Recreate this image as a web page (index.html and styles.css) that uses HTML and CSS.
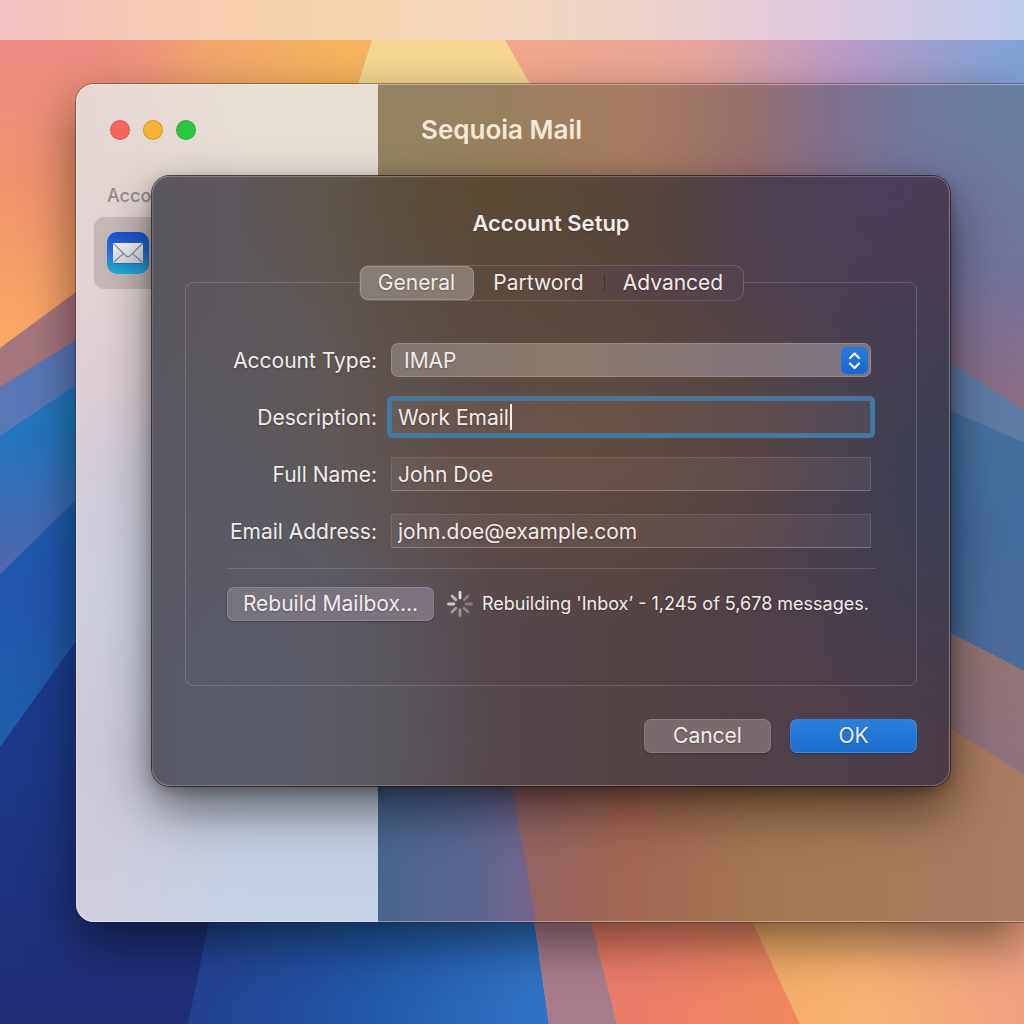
FILE: index.html
```html
<!DOCTYPE html>
<html lang="en">
<head>
<meta charset="utf-8">
<meta name="viewport" content="width=device-width, initial-scale=1">
<title>Sequoia Mail</title>
<link rel="stylesheet" href="styles.css">
</head>
<body>
<div class="desktop">
  <svg class="wallpaper" viewBox="0 0 1024 1024" preserveAspectRatio="none" aria-hidden="true">
    <defs>
      <linearGradient id="sky" x1="0" x2="1" y1="0" y2="0">
        <stop offset="0" stop-color="#ea8a90"/><stop offset=".16" stop-color="#f2a070"/>
        <stop offset=".34" stop-color="#f5b45c"/><stop offset=".5" stop-color="#f3a888"/>
        <stop offset=".68" stop-color="#e8a49c"/><stop offset=".83" stop-color="#b99cc8"/>
        <stop offset="1" stop-color="#7ea3d8"/>
      </linearGradient>
      <linearGradient id="dawn" x1="0" x2="0" y1="0" y2="1">
        <stop offset="0" stop-color="#ec8a8c"/><stop offset=".45" stop-color="#f0936c"/>
        <stop offset="1" stop-color="#fdb062"/>
      </linearGradient>
      <linearGradient id="dawnFade" x1="0" x2="1" y1="0" y2="0">
        <stop offset="0" stop-color="#fff"/><stop offset=".4" stop-color="#fff"/><stop offset="1" stop-color="#000"/>
      </linearGradient>
      <mask id="dawnMask"><rect width="200" height="400" fill="url(#dawnFade)"/></mask>
      <linearGradient id="ridge3" x1="0" x2="0" y1="0" y2="1">
        <stop offset="0" stop-color="#2680b8"/><stop offset=".45" stop-color="#2374bd"/>
        <stop offset="1" stop-color="#5a64aa"/>
      </linearGradient>
      <linearGradient id="ridge4" x1="0" x2="0" y1="0" y2="1">
        <stop offset="0" stop-color="#1a63ad"/><stop offset=".5" stop-color="#2157ae"/>
        <stop offset="1" stop-color="#1d62a8"/>
      </linearGradient>
      <linearGradient id="deep" x1="0" x2="0" y1="0" y2="1">
        <stop offset="0" stop-color="#1a4899"/><stop offset=".4" stop-color="#1c3a8c"/>
        <stop offset="1" stop-color="#212c76"/>
      </linearGradient>
      <linearGradient id="sea" x1="0" x2="1" y1="0" y2="0">
        <stop offset="0" stop-color="#23408f"/><stop offset=".5" stop-color="#2159a9"/>
        <stop offset="1" stop-color="#3074c4"/>
      </linearGradient>
      <linearGradient id="coral" x1="0" x2="1" y1="0" y2="0">
        <stop offset="0" stop-color="#e8786c"/><stop offset="1" stop-color="#f08a5e"/>
      </linearGradient>
      <linearGradient id="sand" x1="0" x2="1" y1="0" y2="0">
        <stop offset="0" stop-color="#f2a95c"/><stop offset=".5" stop-color="#f8b172"/>
        <stop offset="1" stop-color="#f0a080"/>
      </linearGradient>
    </defs>
    <rect width="1024" height="1024" fill="url(#sky)"/>
    <rect width="200" height="400" fill="url(#dawn)" mask="url(#dawnMask)"/>
    <path d="M384 0H494L505 40L530 84L560 140H340L358 84L372 40Z" fill="#f7d893"/>
    <path d="M0 348L76 292L200 210V1024H0Z" fill="#a5767e"/>
    <path d="M0 387L76 340L200 270V1024H0Z" fill="#5878b8"/>
    <path d="M0 436L76 385L200 300V600H0Z" fill="url(#ridge3)"/>
    <path d="M0 574L76 500L200 390V800H0Z" fill="url(#ridge4)"/>
    <path d="M0 747L76 641L200 480H300V1024H0Z" fill="url(#deep)"/>
    <path d="M209 921L230 820H520L549 1024H188Z" fill="url(#sea)"/>
    <path d="M520 820L549 1024H617L570 820Z" fill="#a97c8c"/>
    <path d="M565 820L617 1024H800L705 820Z" fill="url(#coral)"/>
    <path d="M705 820L800 1024H1024V820Z" fill="url(#sand)"/>
  </svg>

  <header class="menubar"></header>

  <main class="window">
    <aside class="sidebar">
      <div class="lights">
        <button class="light light-close" type="button" aria-label="Close"></button>
        <button class="light light-minimize" type="button" aria-label="Minimize"></button>
        <button class="light light-zoom" type="button" aria-label="Zoom"></button>
      </div>
      <h2 class="sidebar-title">Accounts</h2>
      <a class="account" href="#" aria-label="Mail">
        <svg class="account-icon" viewBox="0 0 42 42" aria-hidden="true">
          <defs>
            <linearGradient id="tile" x1="0" x2="0" y1="0" y2="1">
              <stop offset="0" stop-color="#1f4fd8"/><stop offset=".5" stop-color="#2377da"/>
              <stop offset="1" stop-color="#20b0d8"/>
            </linearGradient>
            <linearGradient id="paper" x1="0" x2="0" y1="0" y2="1">
              <stop offset="0" stop-color="#fbfaf8"/><stop offset="1" stop-color="#d5dce0"/>
            </linearGradient>
          </defs>
          <rect width="42" height="42" rx="10" fill="url(#tile)"/>
          <rect x="6" y="12.500" width="30" height="19.500" rx="1.500" fill="#14507e" opacity=".35"/>
          <rect x="6" y="11" width="30" height="20" rx="1.500" fill="url(#paper)"/>
          <path d="M7 12L18.500 23.500Q21 26 23.500 23.500L35 12M7 30L16.500 21.500M35 30L25.500 21.500" fill="none" stroke="#8b8f94" stroke-width="1.200"/>
        </svg>
      </a>
    </aside>
    <section class="viewer">
      <svg class="viewer-glass" viewBox="0 0 646 837" preserveAspectRatio="none" aria-hidden="true">
        <defs>
          <linearGradient id="glassTop" x1="0" x2="1" y1="0" y2="0">
            <stop offset="0" stop-color="#938465"/><stop offset=".2" stop-color="#98805f"/>
            <stop offset=".4" stop-color="#a87a64"/><stop offset=".56" stop-color="#99706b"/>
            <stop offset=".7" stop-color="#80708c"/><stop offset=".85" stop-color="#707a9c"/>
            <stop offset="1" stop-color="#6a7fa0"/>
          </linearGradient>
          <linearGradient id="glassDusk" x1="0" x2="0" y1="0" y2="1">
            <stop offset="0" stop-color="#74719a" stop-opacity="0"/><stop offset=".5" stop-color="#74719a" stop-opacity=".8"/>
            <stop offset="1" stop-color="#906c80"/>
          </linearGradient>
          <linearGradient id="glassBlue" x1="0" x2="0" y1="0" y2="1">
            <stop offset="0" stop-color="#44729f"/><stop offset=".45" stop-color="#446a9e"/>
            <stop offset="1" stop-color="#4e6c98"/>
          </linearGradient>
          <linearGradient id="glassRose" x1="0" x2="0" y1="0" y2="1">
            <stop offset="0" stop-color="#94776f"/><stop offset="1" stop-color="#8c7088"/>
          </linearGradient>
          <linearGradient id="glassSea" x1="0" x2="1" y1="0" y2="0">
            <stop offset="0" stop-color="#48648f"/><stop offset=".6" stop-color="#5b6590"/>
            <stop offset="1" stop-color="#78658a"/>
          </linearGradient>
          <linearGradient id="glassSand" x1="0" x2="1" y1="0" y2="0">
            <stop offset="0" stop-color="#8e6468"/><stop offset=".25" stop-color="#a56654"/>
            <stop offset=".52" stop-color="#a37852"/><stop offset="1" stop-color="#aa7b62"/>
          </linearGradient>
        </defs>
        <rect width="646" height="837" fill="url(#glassTop)"/>
        <rect x="500" y="30" width="146" height="300" fill="url(#glassDusk)"/>
        <path d="M500 242L572 278L646 326V500H500Z" fill="#5f7ba6"/>
        <path d="M500 305L572 326L646 358V620H500Z" fill="url(#glassBlue)"/>
        <path d="M500 510L572 548L646 586V760H500Z" fill="url(#glassRose)"/>
        <path d="M0 640H160V837H0Z" fill="url(#glassSea)"/>
        <path d="M120 620L500 596L572 643L646 690V837H158L134 702Z" fill="url(#glassSand)"/>
      </svg>
      <h1 class="viewer-title">Sequoia Mail</h1>
    </section>
  </main>

  <form class="dialog" role="dialog" aria-labelledby="dialog-title">
    <h2 class="dialog-title" id="dialog-title">Account Setup</h2>
    <div class="tabs" role="tablist">
      <button class="tab tab-active" type="button" role="tab" aria-selected="true">General</button>
      <button class="tab tab-middle" type="button" role="tab" aria-selected="false">Partword</button>
      <button class="tab tab-last" type="button" role="tab" aria-selected="false">Advanced</button>
    </div>
    <div class="panel" role="tabpanel">
      <div class="fields">
        <label class="label" for="type">Account Type:</label>
        <div class="control">
          <select class="select" id="type"><option>IMAP</option></select>
          <svg class="select-arrows" viewBox="0 0 27 27" aria-hidden="true">
            <path d="M9 11L13.500 6.500L18 11M9 16.500L13.500 21L18 16.500" fill="none" stroke="#fff" stroke-width="2.200" stroke-linecap="round" stroke-linejoin="round"/>
          </svg>
        </div>
        <label class="label" for="description">Description:</label>
        <div class="control">
          <input class="input input-focused" id="description" type="text" value="Work Email">
          <span class="caret"></span>
        </div>
        <label class="label" for="fullname">Full Name:</label>
        <div class="control"><input class="input" id="fullname" type="text" value="John Doe"></div>
        <label class="label" for="email">Email Address:</label>
        <div class="control"><input class="input" id="email" type="email" value="john.doe@example.com"></div>
      </div>
      <div class="rebuild">
        <button class="button button-rebuild" type="button">Rebuild Mailbox...</button>
        <svg class="spinner" viewBox="0 0 26 26" aria-hidden="true">
          <g stroke="#eee6ea" stroke-width="2.800" stroke-linecap="round">
            <path d="M13 1.500V7" opacity=".95"/>
            <path d="M21 5L17.200 8.800" opacity=".3"/>
            <path d="M24.500 13H19" opacity=".3"/>
            <path d="M21 21L17.200 17.200" opacity=".35"/>
            <path d="M13 24.500V19" opacity=".45"/>
            <path d="M5 21L8.800 17.200" opacity=".5"/>
            <path d="M1.500 13H7" opacity=".8"/>
            <path d="M5 5L8.800 8.800" opacity=".7"/>
          </g>
        </svg>
        <p class="status" role="status">Rebuilding 'Inbox’ - 1,245 of 5,678 messages.</p>
      </div>
    </div>
    <div class="actions">
      <button class="button" type="button">Cancel</button>
      <button class="button button-primary" type="submit">OK</button>
    </div>
  </form>
</div>
</body>
</html>
```
FILE: styles.css
```css
* {
  box-sizing: border-box;
}

body {
  margin: 0;
  font-family: Inter, "Liberation Sans", sans-serif;
  color: #f1ebe9;
}

h1, h2, p {
  margin: 0;
}

button, input, select {
  margin: 0;
  font: inherit;
  color: inherit;
  text-shadow: inherit;
}

.desktop {
  position: relative;
  min-height: 100vh;
  overflow: hidden;
  background: #1c3486;
}

.wallpaper {
  position: absolute;
  inset: 0;
  width: 100%;
  height: 100%;
}

.menubar {
  position: relative;
  height: 40px;
  background: linear-gradient(90deg, #f5c0c4, #f8cdb0 20%, #f6d4ab 33%, #f3d8bb 45%, #efd3c8 60%, #dfcade 80%, #c0cdec);
}

/* The mail window reaches past the right edge of the desktop. */
.window {
  position: absolute;
  top: 84px;
  bottom: 102px;
  left: 76px;
  right: 0;
  display: flex;
  border-radius: 18px 0 0 18px;
  box-shadow: 0 0 0 1px rgba(40, 25, 30, 0.4), 0 20px 50px rgba(0, 0, 0, 0.5);
}

.window::after {
  content: "";
  position: absolute;
  inset: 0;
  border: 1px solid rgba(255, 245, 235, 0.4);
  border-right: 0;
  border-radius: 18px 0 0 18px;
  pointer-events: none;
}

.sidebar {
  flex: 0 0 302px;
  padding: 36px 18px 0;
  border-radius: 18px 0 0 18px;
  background:
    linear-gradient(90deg, rgba(226, 200, 210, 0.4), rgba(226, 200, 210, 0) 60%),
    linear-gradient(180deg, #e8e0d4, #e4dbd5 22%, #dcd3d6 35%, #cad0de 46%, #c2d3e4 62%, #c2cadc 80%, #c5d3e6);
}

.lights {
  display: flex;
  gap: 13px;
  padding-left: 16px;
}

.light {
  width: 20px;
  height: 20px;
  padding: 0;
  border: 1px solid rgba(120, 60, 20, 0.25);
  border-radius: 50%;
}

.light-close {
  background: #fb655b;
}

.light-minimize {
  background: #f5b335;
}

.light-zoom {
  background: #27c840;
}

.sidebar-title {
  margin-top: 44px;
  padding-left: 13px;
  font-size: 18px;
  line-height: 24px;
  font-weight: 500;
  color: #968d8b;
}

.account {
  display: flex;
  align-items: center;
  height: 72px;
  margin-top: 9px;
  padding-left: 13px;
  border-radius: 10px;
  background: rgba(110, 95, 95, 0.24);
}

.account-icon {
  width: 42px;
  height: 42px;
}

.viewer {
  position: relative;
  flex: 1;
  padding: 28px 43px;
}

.viewer-glass {
  position: absolute;
  inset: 0;
  width: 100%;
  height: 100%;
}

.viewer-title {
  position: relative;
  font-size: 26px;
  line-height: 36px;
  font-weight: 600;
  color: #f3e9d8;
}

.dialog {
  position: absolute;
  top: 176px;
  left: 152px;
  right: 74px;
  padding: 32px;
  border: 1px solid rgba(235, 215, 215, 0.28);
  border-radius: 18px;
  background:
    radial-gradient(ellipse 260px 220px at 42% 0, rgba(94, 76, 42, 0.75), rgba(94, 76, 42, 0)),
    radial-gradient(ellipse 320px 200px at 52% 42%, rgba(108, 82, 56, 0.55), rgba(108, 82, 56, 0)),
    radial-gradient(ellipse 200px 240px at 92% 0, rgba(72, 62, 98, 0.7), rgba(72, 62, 98, 0)),
    radial-gradient(ellipse 200px 260px at 100% 50%, rgba(56, 66, 90, 0.8), rgba(56, 66, 90, 0)),
    radial-gradient(ellipse 260px 420px at 12% 90%, rgba(88, 92, 108, 0.9), rgba(88, 92, 108, 0)),
    linear-gradient(90deg, #5a565e, #5e5858 22%, #55474c 42%, #534344 62%, #4f404a 80%, #4b3c48);
  box-shadow: 0 0 0 1px rgba(35, 22, 28, 0.75), 0 22px 50px rgba(0, 0, 0, 0.55), 0 4px 14px rgba(0, 0, 0, 0.25);
  font-size: 21px;
  text-shadow: 0 1px 2px rgba(0, 0, 0, 0.25);
}

.dialog-title {
  font-size: 22px;
  line-height: 28px;
  font-weight: 600;
  text-align: center;
}

.tabs {
  position: relative;
  display: flex;
  width: max-content;
  height: 36px;
  margin: 28px auto -19px;
  border: 1px solid rgba(200, 175, 170, 0.25);
  border-radius: 10px;
  background: linear-gradient(90deg, #5d4c3f, #5d493f 50%, #574347 75%, #52434f);
}

.tab {
  position: relative;
  width: 130px;
  padding: 0 0 2px;
  border: 0;
  background: none;
}

.tab-active {
  width: 114px;
  border: 1px solid rgba(235, 220, 210, 0.25);
  border-radius: 8px;
  background: linear-gradient(90deg, #867d79, #877a6f);
}

.tab-last {
  width: 139px;
}

.tab-last::before {
  content: "";
  position: absolute;
  top: 8px;
  left: 0;
  width: 1px;
  height: 18px;
  background: rgba(30, 20, 20, 0.4);
}

.panel {
  padding: 60px 41px 64px;
  border: 1px solid rgba(205, 190, 205, 0.24);
  border-radius: 8px;
}

.fields {
  display: grid;
  grid-template-columns: 150px 1fr;
  gap: 23px 14px;
  padding-right: 4px;
  padding-bottom: 20px;
  border-bottom: 1px solid rgba(205, 190, 205, 0.22);
}

.label {
  height: 34px;
  line-height: 36px;
  text-align: right;
  white-space: nowrap;
}

.control {
  position: relative;
  height: 34px;
}

.select,
.input {
  display: block;
  width: 100%;
  height: 34px;
  padding: 0 6px;
  border: 1px solid rgba(205, 185, 185, 0.16);
  border-bottom-color: rgba(220, 200, 200, 0.34);
  background: rgba(255, 225, 215, 0.06);
  outline: 0;
}

.select {
  padding: 0 12px;
  border-color: rgba(235, 220, 210, 0.2);
  border-radius: 7px;
  background: linear-gradient(90deg, #7f7773, #8b7a6b 35%, #857677 65%, #7b7481);
  appearance: none;
}

.select-arrows {
  position: absolute;
  top: 4px;
  right: 3px;
  width: 27px;
  height: 27px;
  border-radius: 6px;
  background: linear-gradient(#2b7ae2, #1665d6);
  pointer-events: none;
}

.input-focused {
  border-color: rgba(70, 120, 155, 0.9);
  box-shadow: 0 0 0 4px #44799f;
  border-radius: 2px;
}

.caret {
  position: absolute;
  top: 4px;
  left: 119px;
  width: 2px;
  height: 26px;
  background: #f4efec;
}

.rebuild {
  display: flex;
  align-items: center;
  padding-top: 18px;
}

.button {
  width: 127px;
  height: 34px;
  padding: 0 0 1px;
  border: 1px solid rgba(235, 220, 225, 0.16);
  border-radius: 7px;
  background: #786a6d;
  box-shadow: 0 1px 2px rgba(0, 0, 0, 0.3);
}

.button-rebuild {
  flex: none;
  width: 207px;
  background: linear-gradient(90deg, #767480, #7d737f);
}

.button-primary {
  border-color: rgba(120, 170, 240, 0.3);
  background: linear-gradient(#2a80e0, #1c6cd0);
}

.spinner {
  flex: none;
  width: 26px;
  height: 26px;
  margin: 0 9px 0 13px;
}

.status {
  font-size: 18px;
  line-height: 24px;
  white-space: nowrap;
}

.actions {
  display: flex;
  justify-content: flex-end;
  gap: 19px;
  margin-top: 33px;
}
```
